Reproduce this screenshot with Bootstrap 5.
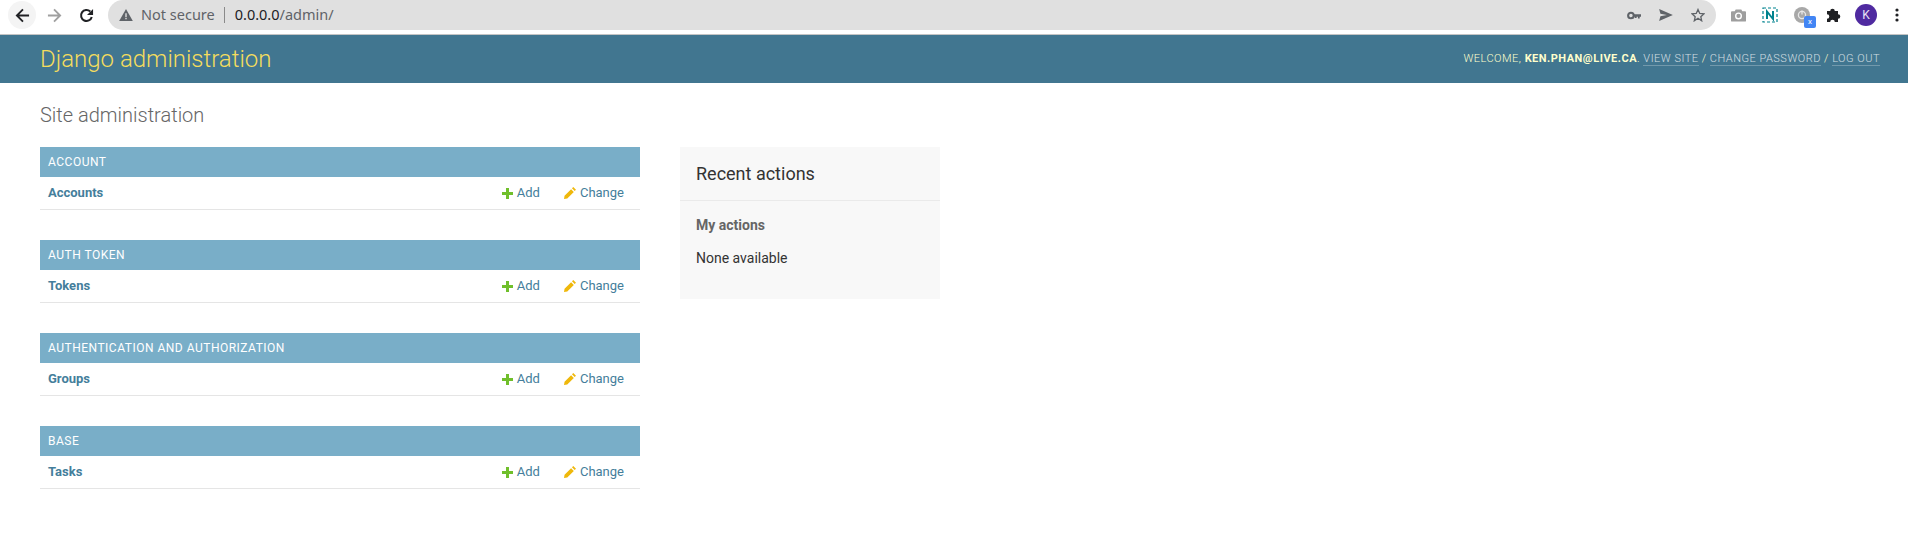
<!DOCTYPE html>
<html lang="en">
<head>
    <meta charset="UTF-8">
    <meta name="viewport" content="width=device-width, initial-scale=1.0">
    <title>Site administration</title>
    <link href="https://cdn.jsdelivr.net/npm/bootstrap@5.3.0/dist/css/bootstrap.min.css" rel="stylesheet">
    <style>
        body {
            font-family: Roboto, "Liberation Sans", sans-serif;
            font-size: 14px;
            color: #333;
            background: #fff;
            overflow: hidden;
        }

        /* browser chrome */
        .tool-bar {
            height: 35px;
            padding: 0 0 4px 6px;
            border-bottom: 1px solid #c4c4c4;
        }

        .tool-btn {
            width: 28px;
            height: 28px;
            margin: 0 2px;
            flex: none;
        }

        .tool-btn.is-active {
            background: #f4f4f4;
        }

        .url-pill {
            width: 1608px;
            height: 30px;
            margin-left: 6px;
            margin-right: 6px;
            padding: 0 2px 0 11px;
            background: #e0e0e0;
            border-radius: 15px;
            font-family: "Noto Sans", sans-serif;
            font-size: 14.5px;
            color: #5f6368;
            flex: none;
        }

        .url-sep {
            width: 1px;
            height: 16px;
            background: #8a8a8a;
            margin: 0 10px 0 9px;
        }

        .url-host {
            color: #202124;
        }

        .pill-icon {
            width: 32px;
        }

        .ext-slot {
            width: 32px;
            flex: none;
        }

        .ext-last {
            width: 25px;
            padding-right: 8px;
        }

        .ext-badge {
            position: absolute;
            left: 18px;
            top: 9px;
            width: 12px;
            height: 12px;
            background: #4285f4;
            border-radius: 2px;
            color: #fff;
            font-size: 8px;
            line-height: 12px;
            text-align: center;
        }

        .avatar-k {
            width: 22px;
            height: 22px;
            background: #4f2aa0;
            color: #e8e0f5;
            font-size: 12px;
        }

        /* django header */
        .dj-header {
            height: 48px;
            padding: 0 28px 0 40px;
            background: #417690;
            color: #ffc;
        }

        .dj-brand {
            font-size: 24px;
            font-weight: 300;
            color: #f5dd5d;
        }

        .dj-tools {
            font-size: 11px;
            font-weight: 300;
            letter-spacing: 0.5px;
            text-transform: uppercase;
            color: #ffc;
        }

        .dj-tools strong {
            font-weight: 700;
        }

        .dj-tools a {
            color: #fff;
            opacity: 0.75;
            text-decoration: none;
            border-bottom: 1px solid rgba(255, 255, 255, 0.35);
        }

        /* content */
        .dj-content {
            padding: 20px 40px;
        }

        .dj-title {
            font-size: 20px;
            font-weight: 300;
            color: #666;
            line-height: 24px;
            margin: 0 0 20px;
        }

        .app-col {
            width: 600px;
            margin-right: 40px;
            flex: none;
        }

        .app-box {
            margin-bottom: 30px;
        }

        .app-head {
            height: 30px;
            padding: 0 8px;
            background: #79aec8;
            color: #fff;
            font-size: 12px;
            letter-spacing: 0.5px;
            text-transform: uppercase;
        }

        .app-row {
            height: 33px;
            padding: 0 16px 0 8px;
            border-bottom: 1px solid #e5e5e5;
            font-size: 13px;
        }

        .app-row a {
            color: #447e9b;
            text-decoration: none;
        }

        .app-model {
            font-weight: 700;
        }

        .act-add {
            margin-right: 24px;
        }

        .act-add svg,
        .act-change svg {
            margin-right: 4px;
            flex: none;
        }

        .recent-box {
            width: 260px;
            height: 152px;
            background: #f8f8f8;
            flex: none;
        }

        .recent-title {
            height: 54px;
            padding: 0 16px;
            border-bottom: 1px solid #eaeaea;
            font-size: 18px;
            color: #333;
        }

        .recent-sub {
            padding: 16px 16px 0;
            font-size: 14px;
            font-weight: 700;
            color: #666;
            line-height: 17px;
        }

        .recent-none {
            padding: 16px 16px 0;
            font-size: 14px;
            line-height: 17px;
        }
    </style>
</head>
<body>
    <div class="tool-bar d-flex align-items-center">
        <div class="tool-btn is-active rounded-circle d-flex align-items-center justify-content-center">
            <svg width="15" height="15" viewBox="0 0 16 16"><path d="M15 8H2.5M8.5 1.5 2 8l6.500 6.500" fill="none" stroke="#202124" stroke-width="2"/></svg>
        </div>
        <div class="tool-btn d-flex align-items-center justify-content-center">
            <svg width="15" height="15" viewBox="0 0 16 16"><path d="M1 8h12.5M7.5 1.5 14 8l-6.500 6.500" fill="none" stroke="#a0a0a0" stroke-width="2"/></svg>
        </div>
        <div class="tool-btn d-flex align-items-center justify-content-center">
            <svg width="15" height="15" viewBox="0 0 16 16"><path d="M13.6 9.5A5.8 5.8 0 1 1 12 3.8" fill="none" stroke="#202124" stroke-width="2.2"/><path d="M15 1v6.500H8.500z" fill="#202124"/></svg>
        </div>
        <div class="url-pill d-flex align-items-center">
            <svg class="me-2" width="14" height="12" viewBox="0 0 16 14"><path d="M8 0 16 14H0z" fill="#5f6368"/><path d="M7.2 5h1.6v4.500H7.200zM7.200 10.500h1.600V12H7.200z" fill="#e0e0e0"/></svg>
            <span>Not secure</span>
            <span class="url-sep"></span>
            <span><span class="url-host">0.0.0.0</span>/admin/</span>
            <div class="ms-auto d-flex align-items-center">
                <div class="pill-icon d-flex justify-content-center">
                    <svg width="14" height="9" viewBox="0 0 16 10"><circle cx="4.5" cy="5" r="3.2" fill="none" stroke="#5f6368" stroke-width="2.4"/><path d="M7 3.6h9v2.800h-1.500v2h-2v-2H11v1.500H9V6.400H7z" fill="#5f6368"/></svg>
                </div>
                <div class="pill-icon d-flex justify-content-center">
                    <svg width="14" height="12" viewBox="0 0 16 14"><path d="M0 0 16 7 0 14l1.500-5.600L9 7 1.500 5.600z" fill="#5f6368"/></svg>
                </div>
                <div class="pill-icon d-flex justify-content-center">
                    <svg width="14" height="14" viewBox="0 0 16 15"><path d="m8 1.200 2 4.500 4.800.5-3.600 3.200 1 4.700L8 11.200l-4.200 2.900 1-4.700L1.200 6.200 6 5.700z" fill="none" stroke="#5f6368" stroke-width="1.5"/></svg>
                </div>
            </div>
        </div>
        <div class="ext-slot d-flex justify-content-center">
            <svg width="15" height="13" viewBox="0 0 16 13"><path d="M1 2h3l1-2h6l1 2h3a1 1 0 0 1 1 1v9a1 1 0 0 1-1 1H1a1 1 0 0 1-1-1V3a1 1 0 0 1 1-1z" fill="#9e9e9e"/><circle cx="8" cy="7" r="3" fill="none" stroke="#fff" stroke-width="1.5"/></svg>
        </div>
        <div class="ext-slot d-flex justify-content-center">
            <svg width="16" height="16" viewBox="0 0 16 16"><rect x="1" y="1" width="14" height="14" fill="none" stroke="#00838f" stroke-width="1.2" stroke-dasharray="3 2"/><path d="M5 12V4.500L11 12V4" fill="none" stroke="#00838f" stroke-width="2"/></svg>
        </div>
        <div class="ext-slot position-relative d-flex justify-content-center">
            <svg width="16" height="16" viewBox="0 0 16 16"><circle cx="8" cy="8" r="8" fill="#a8a8a8"/><circle cx="8" cy="8" r="3.6" fill="none" stroke="#e8e8e8" stroke-width="1.3"/><path d="M8 3.500v4" stroke="#e8e8e8" stroke-width="1.3"/></svg>
            <span class="ext-badge">x</span>
        </div>
        <div class="ext-slot d-flex justify-content-center">
            <svg width="16" height="16" viewBox="0 0 16 16"><path d="M1 4h3.200a2.300 2.300 0 1 1 4.600 0H12v3.200a2.300 2.300 0 1 1 0 4.600V15H8.800a2.300 2.300 0 1 0-4.600 0H1v-3.200a2.300 2.300 0 1 0 0-4.600z" fill="#202124"/></svg>
        </div>
        <div class="ext-slot d-flex justify-content-center">
            <div class="avatar-k rounded-circle d-flex align-items-center justify-content-center">K</div>
        </div>
        <div class="ext-slot ext-last d-flex justify-content-end">
            <svg width="4" height="14" viewBox="0 0 4 14"><circle cx="2" cy="2" r="1.6" fill="#202124"/><circle cx="2" cy="7" r="1.6" fill="#202124"/><circle cx="2" cy="12" r="1.6" fill="#202124"/></svg>
        </div>
    </div>

    <div class="dj-header d-flex align-items-center justify-content-between">
        <div class="dj-brand">Django administration</div>
        <div class="dj-tools">
            Welcome, <strong>ken.phan@live.ca</strong>.
            <a href="#">View site</a> /
            <a href="#">Change password</a> /
            <a href="#">Log out</a>
        </div>
    </div>

    <div class="dj-content">
        <h1 class="dj-title">Site administration</h1>
        <div class="d-flex align-items-start">
            <div class="app-col" id="appList"></div>
            <div class="recent-box">
                <div class="recent-title d-flex align-items-center">Recent actions</div>
                <div class="recent-sub">My actions</div>
                <div class="recent-none">None available</div>
            </div>
        </div>
    </div>

    <script>
        const apps = [
            { name: 'Account', model: 'Accounts' },
            { name: 'Auth Token', model: 'Tokens' },
            { name: 'Authentication and Authorization', model: 'Groups' },
            { name: 'Base', model: 'Tasks' }
        ];

        const plusIcon = '<svg width="11" height="11" viewBox="0 0 11 11"><path d="M4 0h3v4h4v3H7v4H4V7H0V4h4z" fill="#70bf2b"/></svg>';
        const pencilIcon = '<svg width="12" height="12" viewBox="0 0 11 11"><path d="M8.500 0 11 2.500 9.800 3.700 7.300 1.200zM6.500 2 9 4.500 3 10.500 0 11 .5 8z" fill="#efb80b"/></svg>';

        document.getElementById('appList').innerHTML = apps.map(app => `
            <div class="app-box">
                <div class="app-head d-flex align-items-center">${app.name}</div>
                <div class="app-row d-flex align-items-center">
                    <a class="app-model me-auto" href="#">${app.model}</a>
                    <a class="act-add d-flex align-items-center" href="#">${plusIcon}Add</a>
                    <a class="act-change d-flex align-items-center" href="#">${pencilIcon}Change</a>
                </div>
            </div>`).join('');
    </script>
    <script src="https://cdn.jsdelivr.net/npm/bootstrap@5.3.0/dist/js/bootstrap.bundle.min.js"></script>
</body>
</html>
